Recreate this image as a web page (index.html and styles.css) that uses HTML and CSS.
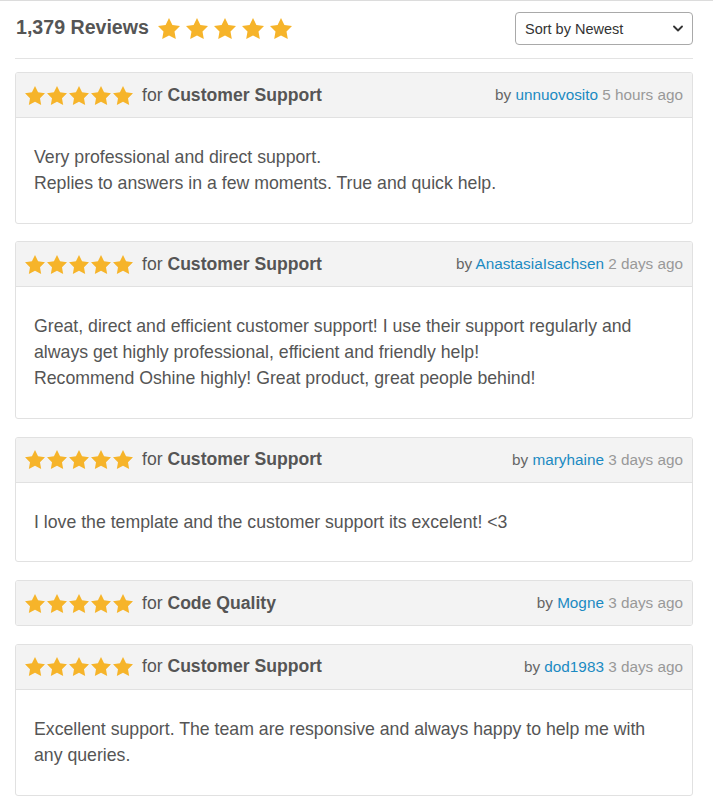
FILE: index.html
```html
<!DOCTYPE html>
<html lang="en">
<head>
<meta charset="utf-8">
<title>Reviews</title>
<link rel="stylesheet" href="styles.css">
</head>
<body>
<svg width="0" height="0" class="defs" aria-hidden="true">
  <defs>
    <symbol id="star" viewBox="2 2 20 19.02">
      <path d="M12 2l3.09 6.26L22 9.27l-5 4.87 1.18 6.88L12 17.77l-6.18 3.25L7 14.14 2 9.27l6.91-1.01z"/>
    </symbol>
  </defs>
</svg>
<div class="page">
  <div class="top">
    <div class="title">
      <h1>1,379 Reviews</h1>
      <div class="stars big">
        <svg><use href="#star"/></svg><svg><use href="#star"/></svg><svg><use href="#star"/></svg><svg><use href="#star"/></svg><svg><use href="#star"/></svg>
      </div>
    </div>
    <div class="select">
      <span>Sort by Newest</span>
      <svg class="chev" viewBox="0 0 10 6"><path d="M1 1l4 4 4-4" fill="none" stroke="#333" stroke-width="1.8" stroke-linecap="round" stroke-linejoin="round"/></svg>
    </div>
  </div>

  <div class="list">
    <div class="card">
      <div class="head">
        <div class="left">
          <div class="stars"><svg><use href="#star"/></svg><svg><use href="#star"/></svg><svg><use href="#star"/></svg><svg><use href="#star"/></svg><svg><use href="#star"/></svg></div>
          <span class="for">for <b>Customer Support</b></span>
        </div>
        <div class="meta">by <a>unnuovosito</a> <span class="time">5 hours ago</span></div>
      </div>
      <div class="body">
        <p>Very professional and direct support.<br>Replies to answers in a few moments. True and quick help.</p>
      </div>
    </div>

    <div class="card">
      <div class="head">
        <div class="left">
          <div class="stars"><svg><use href="#star"/></svg><svg><use href="#star"/></svg><svg><use href="#star"/></svg><svg><use href="#star"/></svg><svg><use href="#star"/></svg></div>
          <span class="for">for <b>Customer Support</b></span>
        </div>
        <div class="meta">by <a>AnastasiaIsachsen</a> <span class="time">2 days ago</span></div>
      </div>
      <div class="body">
        <p>Great, direct and efficient customer support! I use their support regularly and always get highly professional, efficient and friendly help!<br>Recommend Oshine highly! Great product, great people behind!</p>
      </div>
    </div>

    <div class="card">
      <div class="head">
        <div class="left">
          <div class="stars"><svg><use href="#star"/></svg><svg><use href="#star"/></svg><svg><use href="#star"/></svg><svg><use href="#star"/></svg><svg><use href="#star"/></svg></div>
          <span class="for">for <b>Customer Support</b></span>
        </div>
        <div class="meta">by <a>maryhaine</a> <span class="time">3 days ago</span></div>
      </div>
      <div class="body">
        <p>I love the template and the customer support its excelent! &lt;3</p>
      </div>
    </div>

    <div class="card">
      <div class="head only">
        <div class="left">
          <div class="stars"><svg><use href="#star"/></svg><svg><use href="#star"/></svg><svg><use href="#star"/></svg><svg><use href="#star"/></svg><svg><use href="#star"/></svg></div>
          <span class="for">for <b>Code Quality</b></span>
        </div>
        <div class="meta">by <a>Mogne</a> <span class="time">3 days ago</span></div>
      </div>
    </div>

    <div class="card">
      <div class="head">
        <div class="left">
          <div class="stars"><svg><use href="#star"/></svg><svg><use href="#star"/></svg><svg><use href="#star"/></svg><svg><use href="#star"/></svg><svg><use href="#star"/></svg></div>
          <span class="for">for <b>Customer Support</b></span>
        </div>
        <div class="meta">by <a>dod1983</a> <span class="time">3 days ago</span></div>
      </div>
      <div class="body">
        <p>Excellent support. The team are responsive and always happy to help me with any queries.</p>
      </div>
    </div>
  </div>
</div>
</body>
</html>
```

FILE: styles.css
```css
* { box-sizing: border-box; }
html, body { margin: 0; padding: 0; background: #fff; }
body {
  font-family: "Liberation Sans", Arial, sans-serif;
  color: #555;
  border-top: 1px solid #dcdcdc;
}
.defs { position: absolute; width: 0; height: 0; overflow: hidden; }
.page { padding: 0 20px 0 15px; }

.top {
  display: flex;
  justify-content: space-between;
  align-items: center;
  padding: 10px 0 13px 1px;
  border-bottom: 1px solid #e3e3e3;
  margin-bottom: 13px;
}
.title { display: flex; align-items: center; gap: 9px; }
.title h1 {
  margin: 0 0 3px 0;
  font-size: 19.6px;
  font-weight: bold;
  color: #555;
  line-height: 26px;
}
.stars { display: flex; gap: 2px; }
.stars svg { width: 20px; height: 19px; fill: #f6b42a; display: block; }
.stars.big { gap: 6px; margin-top: 1px; }
.stars.big svg { width: 22px; height: 21px; }

.select {
  width: 178px;
  height: 33px;
  border: 1px solid #a9a9a9;
  border-radius: 4px;
  display: flex;
  align-items: center;
  justify-content: space-between;
  padding: 0 9px 0 9px;
  font-size: 14.5px;
  color: #333;
  margin-top: 1px;
}
.select .chev { width: 10px; height: 7px; }

.list { display: flex; flex-direction: column; gap: 17.8px; }
.card {
  border: 1px solid #e1e1e1;
  border-radius: 3px;
  overflow: hidden;
  background: #fff;
}
.head {
  background: #f3f3f3;
  height: 45px;
  border-bottom: 1px solid #e1e1e1;
  display: flex;
  align-items: center;
  justify-content: space-between;
  padding: 0 9px 0 9px;
}
.head.only { border-bottom: none; height: 44px; }
.left { display: flex; align-items: center; gap: 9px; }
.for { font-size: 17.6px; color: #555; }
.for b { font-weight: bold; }
.meta { font-size: 15.3px; color: #666; }
.meta a { color: #1b8ac2; }
.meta .time { color: #999; }

.body { padding: 27px 24px 26px 18px; }
.body p {
  margin: 0;
  font-size: 17.7px;
  line-height: 25.8px;
  color: #555;
}
```
